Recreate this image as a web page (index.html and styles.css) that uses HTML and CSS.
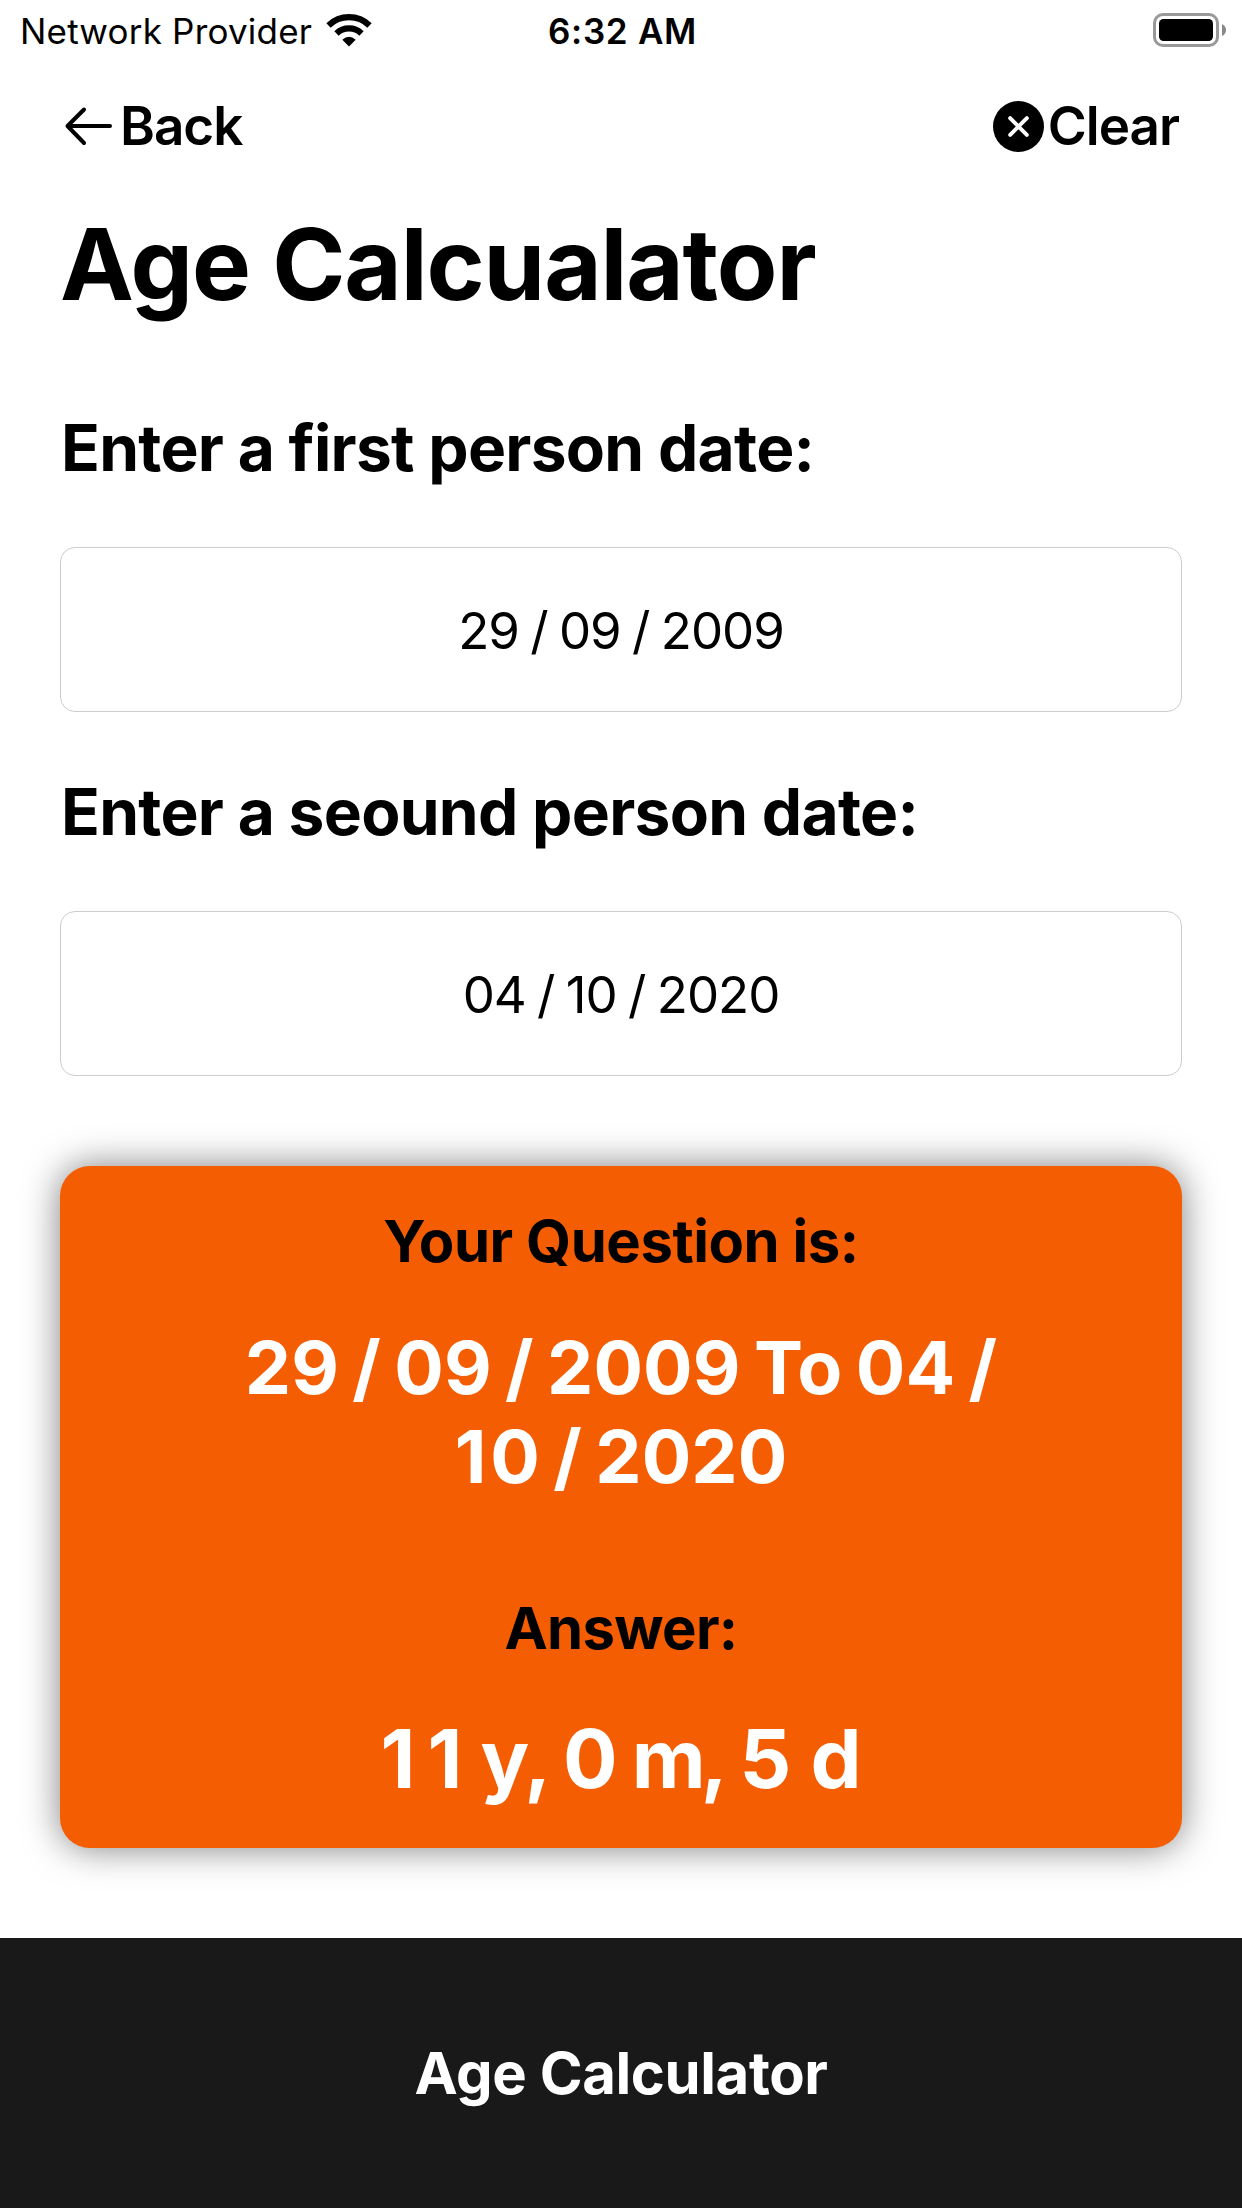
FILE: index.html
```html
<!DOCTYPE html>
<html lang="en">
<head>
<meta charset="utf-8">
<title>Age Calculator</title>
<link rel="stylesheet" href="styles.css">
</head>
<body>
<header class="status">
  <div class="network">
    <span class="carrier">Network Provider</span>
    <svg class="wifi" viewBox="0 0 46 34" width="46" height="34"><g fill="none" stroke="#000" stroke-width="6.200"><path d="M2.500 12.500a29.500 29.500 0 0 1 41 0"/><path d="M10.500 20.500a18 18 0 0 1 25 0"/></g><path d="M23 33.500l-6.700-6.700q6.700-6 13.400 0z"/></svg>
  </div>
  <span class="time">6:32 AM</span>
  <svg class="battery" viewBox="0 0 73 34" width="73" height="34"><rect x="1.500" y="1.500" width="63" height="31" rx="8.500" fill="none" stroke="#999" stroke-width="3"/><rect x="6" y="6" width="54" height="22" rx="4.500"/><path d="M69 11q4 2 4 6t-4 6z" fill="#888"/></svg>
</header>
<nav class="nav">
  <a class="action back"><svg class="arrow" viewBox="0 0 48 42" width="48" height="42"><path d="M20 4.500L3.500 21l16.500 17M3.500 21h42.500" fill="none" stroke="#000" stroke-width="4" stroke-linecap="round" stroke-linejoin="round"/></svg><span>Back</span></a>
  <a class="action clear"><svg class="close" viewBox="0 0 52 52" width="51" height="51"><circle cx="26" cy="26" r="26"/><path d="M17.500 17.500l17 17m0-17l-17 17" stroke="#fff" stroke-width="4" stroke-linecap="round"/></svg><span>Clear</span></a>
</nav>
<main class="main">
  <h1 class="title">Age Calcualator</h1>
  <h2 class="label">Enter a first person date:</h2>
  <div class="field">29 / 09 / 2009</div>
  <h2 class="label">Enter a seound person date:</h2>
  <div class="field">04 / 10 / 2020</div>
  <section class="card">
    <h3 class="caption">Your Question is:</h3>
    <p class="range">29 / 09 / 2009 To 04 /<br><span class="one">1</span>0 / 2020</p>
    <h3 class="caption answer">Answer:</h3>
    <p class="result"><span class="wide">1</span><span class="one">1</span> <span class="tight">y</span>, 0 <span class="tight">m</span>, 5<span class="loose"> </span>d</p>
  </section>
</main>
<footer class="footer">Age Calculator</footer>
</body>
</html>
```
FILE: styles.css
```css
* { box-sizing: border-box; }
body { margin: 0; height: 2208px; display: flex; flex-direction: column; font-family: Inter, "Liberation Sans", sans-serif; color: #000; background: #fff; white-space: nowrap; overflow: hidden; }
h1, h2, h3, p { margin: 0; }
svg { display: block; flex: none; }
.status { height: 60px; padding: 0 16px 0 20px; display: grid; grid-template-columns: 1fr auto 1fr; align-items: center; font-size: 35px; line-height: 44px; }
.network { display: flex; align-items: center; gap: 14px; }
.carrier { padding-top: 2px; letter-spacing: 0.2px; }
.time { padding: 2px 1px 0 0; font-weight: 600; letter-spacing: 0.7px; }
.battery { justify-self: end; }
.nav { height: 132px; padding: 0 63px 0 64px; display: flex; justify-content: space-between; align-items: center; font-size: 53px; line-height: 64px; font-weight: 600; letter-spacing: -1px; }
.action { display: flex; align-items: center; }
.back { gap: 8px; }
.clear { gap: 4px; }
.main { flex: 1; padding: 0 60px; }
.title { height: 156px; line-height: 145px; font-size: 99px; font-weight: 700; letter-spacing: -1.1px; }
.label { height: 199px; padding-left: 1px; line-height: 200px; font-size: 64px; font-weight: 700; letter-spacing: -0.7px; }
.field { height: 165px; padding-top: 1px; border: 1px solid #ccc; border-radius: 15px; display: flex; justify-content: center; align-items: center; font-size: 51px; letter-spacing: -1px; word-spacing: -2px; }
.card { margin-top: 90px; height: 682px; padding-top: 30px; background: #f55d02; border-radius: 30px; box-shadow: 0 0 36px rgba(0, 0, 0, .5); text-align: center; }
.caption { font-size: 58px; line-height: 90px; font-weight: 700; letter-spacing: -0.45px; }
.range { color: #fff; font-size: 73.5px; line-height: 89px; font-weight: 700; margin-top: 37px; letter-spacing: 0.1px; word-spacing: -4.2px; }
.answer { margin-top: 82px; letter-spacing: -0.7px; }
.result { color: #fff; font-size: 81px; line-height: 96px; font-weight: 700; margin-top: 38px; word-spacing: -5px; }
.wide { letter-spacing: 12px; }
.one { letter-spacing: 4px; }
.tight { letter-spacing: -5px; }
.loose { word-spacing: 0; }
.footer { height: 270px; background: #191919; color: #fff; display: flex; justify-content: center; align-items: center; font-size: 58px; font-weight: 700; letter-spacing: -0.4px; }
```
